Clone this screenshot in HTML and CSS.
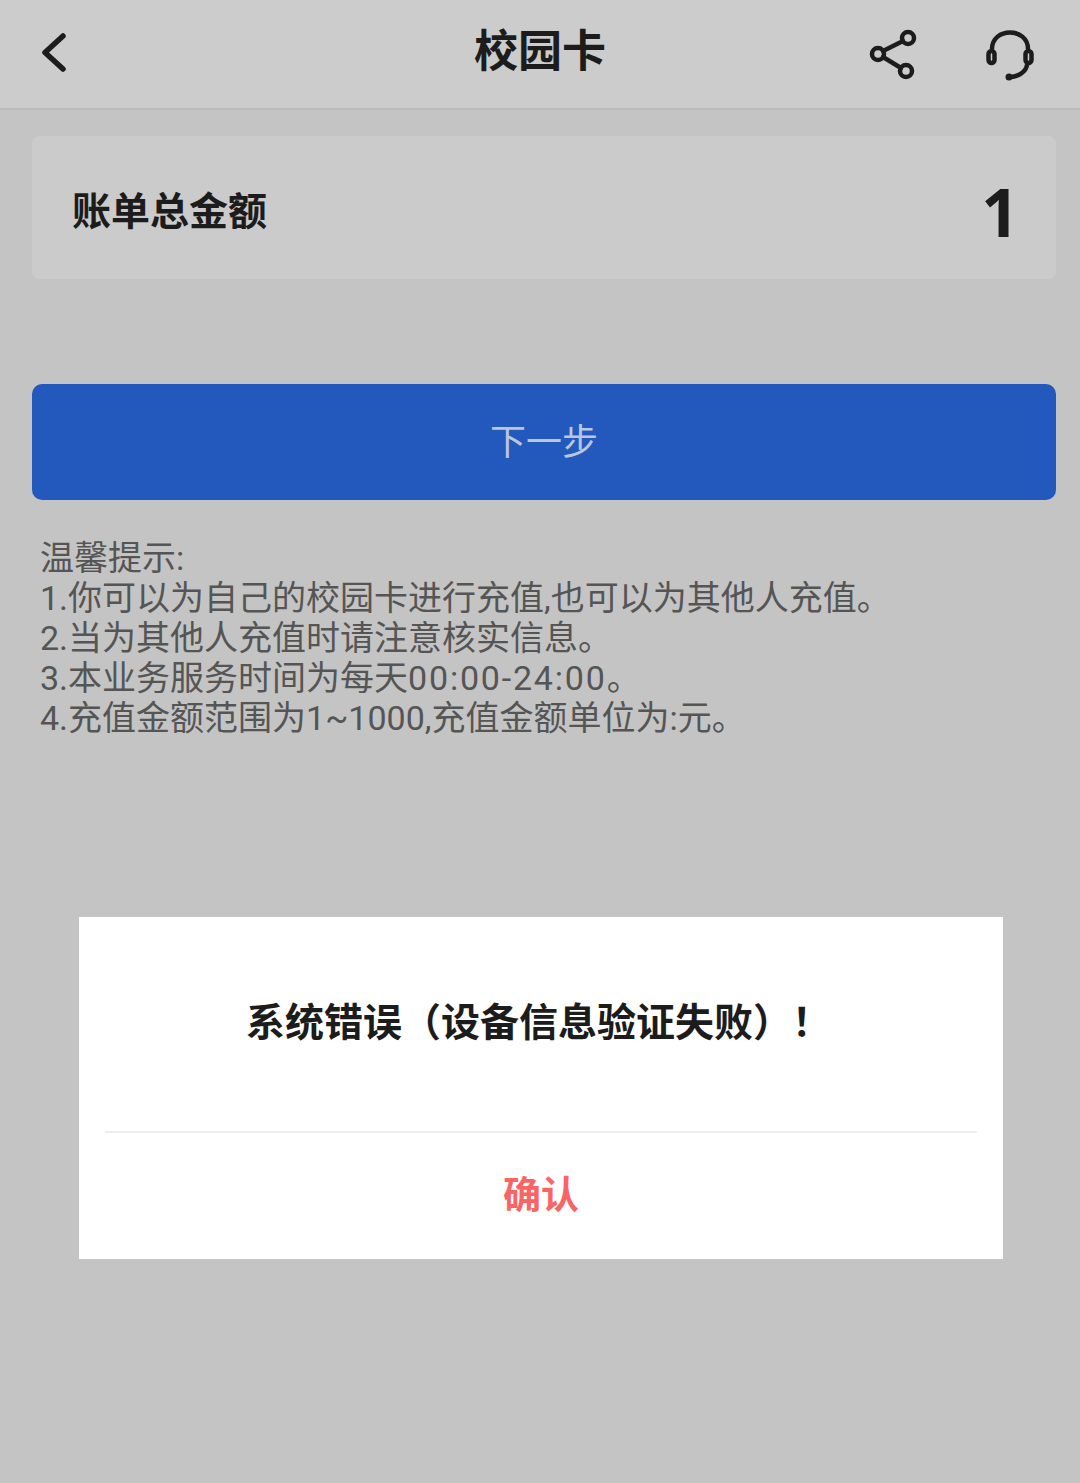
FILE: index.html
```html
<!DOCTYPE html>
<html lang="zh-CN">

<head>
    <meta charset="UTF-8" />
    <meta name="viewport" content="width=device-width, initial-scale=1.0" />
    <title>校园卡</title>
    <link rel="stylesheet" href="styles.css">
</head>

<body>
    <header class="topbar">
        <svg class="back-icon" viewBox="0 0 40 60" width="40" height="60">
            <path d="M29 14 L11 30.500 L29 47" />
        </svg>
        <h1 class="topbar-title">校园卡</h1>
        <div class="topbar-icons">
            <svg class="icon" viewBox="0 0 60 60" width="60" height="60">
                <circle cx="15" cy="30" r="6" />
                <circle cx="45" cy="14" r="6" />
                <circle cx="43" cy="47" r="6" />
                <path d="M20 27 L40 17 M20 33 L38 44" />
            </svg>
            <svg class="icon" viewBox="0 0 60 60" width="60" height="60">
                <path d="M12 25 C12 3 48 3 48 25" />
                <rect x="8.500" y="27" width="6" height="12" rx="3" />
                <rect x="45.500" y="27" width="6" height="12" rx="3" />
                <path d="M47 41 C46 48 38 53 29 53" />
                <circle class="icon-dot" cx="29" cy="53" r="3.500" />
            </svg>
        </div>
    </header>

    <main class="content">
        <section class="bill-card">
            <span class="bill-label">账单总金额</span>
            <span class="bill-amount">1</span>
        </section>

        <button class="next-btn">下一步</button>

        <div class="tips">
            <p>温馨提示:</p>
            <p>1.你可以为自己的校园卡进行充值,也可以为其他人充值。</p>
            <p>2.当为其他人充值时请注意核实信息。</p>
            <p>3.本业务服务时间为每天<span class="tips-time">00:00-24:00</span>。</p>
            <p>4.充值金额范围为1~1000,充值金额单位为:元。</p>
        </div>
    </main>

    <div class="dialog">
        <div class="dialog-msg">系统错误（设备信息验证失败）！</div>
        <div class="dialog-action">确认</div>
    </div>
</body>

</html>
```

FILE: styles.css
```css
* {
    box-sizing: border-box;
    margin: 0;
    padding: 0;
    font-family: Roboto, "Noto Sans CJK SC", sans-serif;
    text-spacing-trim: space-all;
}

body {
    position: relative;
    height: 1483px;
    overflow: hidden;
    background-color: #c4c4c4;
    color: #1c1c1c;
}

.topbar {
    position: relative;
    display: flex;
    align-items: center;
    justify-content: space-between;
    height: 110px;
    padding: 0 40px 0 34px;
    background-color: #cccccc;
    border-bottom: 2px solid #bcbcbc;
}

.topbar-title {
    position: absolute;
    top: 22px;
    left: 0;
    width: 100%;
    font-size: 44px;
    line-height: 60px;
    font-weight: 700;
    text-align: center;
}

.back-icon {
    margin-top: -4px;
}

.back-icon path {
    fill: none;
    stroke: #1c1c1c;
    stroke-width: 5.500;
    stroke-linecap: round;
    stroke-linejoin: round;
}

.topbar-icons {
    display: flex;
    gap: 57px;
}

.icon {
    fill: none;
    stroke: #1c1c1c;
    stroke-width: 4.500;
    stroke-linecap: round;
}

.icon-dot {
    fill: #1c1c1c;
    stroke: none;
}

.content {
    padding: 26px 24px 0 32px;
}

.bill-card {
    display: flex;
    align-items: center;
    justify-content: space-between;
    height: 143px;
    padding: 0 37px 0 40px;
    background-color: #cbcbcb;
    border-radius: 8px;
}

.bill-label {
    font-size: 39px;
    font-weight: 700;
}

.bill-amount {
    margin-top: 6px;
    font-family: "Noto Sans", sans-serif;
    font-size: 66px;
    font-weight: 700;
}

.next-btn {
    display: block;
    width: 100%;
    height: 116px;
    margin-top: 105px;
    padding-bottom: 6px;
    background-color: #2358bd;
    border: none;
    border-radius: 10px;
    color: #b9c6dd;
    font-size: 36px;
}

.tips {
    margin-top: 38px;
    padding-left: 8px;
    color: #555555;
    font-size: 34px;
    line-height: 40px;
}

.tips-time {
    letter-spacing: 1.800px;
}

.dialog {
    position: absolute;
    top: 917px;
    left: 79px;
    width: 924px;
    height: 342px;
    padding: 0 26px;
    background-color: #ffffff;
}

.dialog-msg {
    height: 216px;
    padding: 78px 5px 0 0;
    border-bottom: 2px solid #eeeeee;
    font-size: 39px;
    line-height: 56px;
    font-weight: 700;
    text-align: center;
}

.dialog-action {
    padding-top: 34px;
    color: #fb6464;
    font-size: 38px;
    line-height: 56px;
    font-weight: 700;
    text-align: center;
}
```
